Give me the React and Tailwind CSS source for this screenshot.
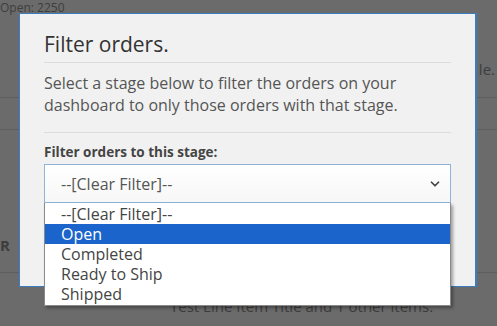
import React from 'react';
import { ChevronDown } from 'lucide-react';

const stages = ['--[Clear Filter]--', 'Open', 'Completed', 'Ready to Ship', 'Shipped'];

const FilterModal = ({ selected = 'Open' }) => (
  <div className="absolute left-[19px] top-[13px] w-[458px] h-[274px] bg-[#f1f1f1] border border-[#3b7bbf] border-r-2 px-[24px] pt-[16px]">
    <h2 className="text-[21px] leading-[28px] text-[#333]">Filter orders.</h2>
    <hr className="mt-[4px] border-[#dcdcdc]" />
    <p className="mt-[9px] text-[16px] leading-[22px] text-[#555]">
      Select a stage below to filter the orders on your dashboard to only those orders with that stage.
    </p>
    <hr className="mt-[16px] border-[#dcdcdc]" />
    <label className="block mt-[10px] text-[13.5px] leading-[18px] font-bold text-[#444]">Filter orders to this stage:</label>
    <div className="relative mt-[3px]">
      <div className="h-[39px] flex items-center justify-between pl-[16px] pr-[8px] bg-gradient-to-b from-white to-[#f7f7f7] border border-[#8fb3d9] text-[16px] text-[#555]">
        <span>--[Clear Filter]--</span>
        <ChevronDown size={14} strokeWidth={3} className="text-[#444]" />
      </div>
      <ul className="absolute left-0 right-0 top-[39px] py-[1px] bg-white border border-[#8a8a8a] border-t-0 shadow-[2px_2px_3px_rgba(0,0,0,0.35)] z-10">
        {stages.map((s) => (
          <li
            key={s}
            className={
              s === selected
                ? 'h-[20px] leading-[20px] pl-[16px] text-[16px] bg-[#1a64cc] text-white'
                : 'h-[20px] leading-[20px] pl-[16px] text-[16px] text-[#444]'
            }
          >
            {s}
          </li>
        ))}
      </ul>
    </div>
  </div>
);

export default function App() {
  return (
    <div className="relative w-[497px] h-[326px] overflow-hidden bg-[#6b6b6b] text-[#3d3d3d]" style={{ fontFamily: '"Open Sans", "Noto Sans", sans-serif' }}>
      <div className="flex flex-col">
        <div className="h-[98px] border-b border-[#5e5e5e]">
          <p className="text-[12px] leading-[14px] pt-[1px]">
            Open: <span className="underline">2250</span>
          </p>
          <p className="text-[15px] text-right pr-[2px] mt-[43px]">le.</p>
        </div>
        <div className="h-[32px] border-b border-[#5e5e5e]" />
        <div className="h-[143px] border-b border-[#5e5e5e] flex items-end pb-[16px]">
          <span className="text-[15px] font-bold">R</span>
        </div>
        <p className="pl-[170px] mt-[22px] text-[15px]">Test Line Item Title and 1 other items.</p>
      </div>
      <FilterModal />
    </div>
  );
}
